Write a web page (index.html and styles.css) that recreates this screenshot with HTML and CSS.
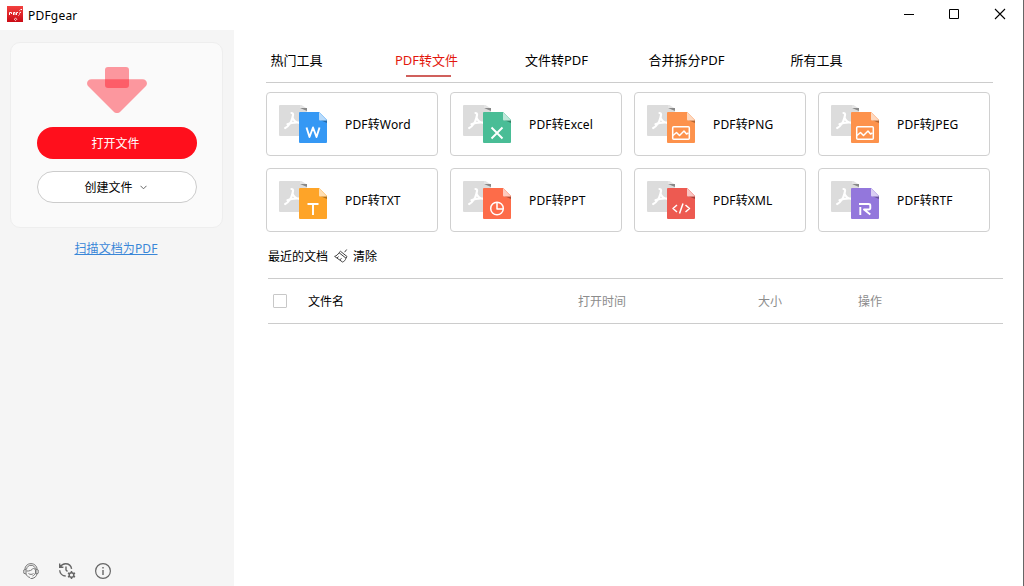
FILE: index.html
```html
<!DOCTYPE html>
<html lang="zh-CN">
<head>
<meta charset="utf-8">
<title>PDFgear</title>
<link rel="stylesheet" href="styles.css">
</head>
<body>
<svg class="defs" width="0" height="0">
  <defs>
    <symbol id="pdf-page" viewBox="0 0 49 39">
      <path d="M1 0H21v3h7v28H1a1 1 0 0 1-1-1V1a1 1 0 0 1 1-1z" fill="#dcdcdc"/>
      <path d="M21 0h1.500l5.500 3.500h-7z" fill="#e4e4e4"/>
      <path d="M21 3h7v3z" fill="#888"/>
      <path d="M12.500 8c2.200 0 1.600 2 1 4.500-1 4-4 9-7.300 10.500M13.500 12.500c1 3 3 5 7 5.500M8.500 19.200c3-1.500 6-2 11.500-1.700" fill="none" stroke="#fff" stroke-width="2.200" stroke-linecap="round"/>
    </symbol>
    <symbol id="front-page" viewBox="0 0 28 31">
      <path d="M1 0H20l8 8v22a1 1 0 0 1-1 1H1a1 1 0 0 1-1-1V1a1 1 0 0 1 1-1z" fill="currentColor"/>
      <path d="M21 8h7v3z" fill="#000" opacity=".3"/>
      <path d="M20 0l8 8.500h-7a1 1 0 0 1-1-1z" fill="currentColor"/>
      <path d="M20 0l8 8.500h-7a1 1 0 0 1-1-1z" fill="#fff" opacity=".65"/>
    </symbol>
    <linearGradient id="brand" x1="0" y1="0" x2="0" y2="1"><stop offset="0" stop-color="#f3413f"/><stop offset="1" stop-color="#cb0b15"/></linearGradient>
  </defs>
</svg>
<div class="window">
  <header class="titlebar">
    <svg class="logo" width="16" height="16" viewBox="0 0 16 16">
      <rect width="16" height="16" fill="url(#brand)"/>
      <path d="M2.500 9V6.500H4.500V8M6.500 9V6.500H8V9M9.500 9V6.500h1.500M12 7.500l2-1.500M12.500 4.500l1-1M14 4l1-1M11.500 9.500l1-1" fill="none" stroke="#fff" stroke-width="1"/>
      <path d="M8.500 12l1.300 1.300-1.300 1.300-1.300-1.300z" fill="none" stroke="#fff" stroke-width=".8"/>
    </svg>
    <span class="app-name">PDFgear</span>
    <div class="controls">
      <svg width="12" height="12" viewBox="0 0 12 12"><path d="M1 6.500h10" stroke="#000" fill="none"/></svg>
      <svg width="12" height="12" viewBox="0 0 12 12"><path d="M1.500 1.500h9v9h-9z" stroke="#000" fill="none"/></svg>
      <svg width="12" height="12" viewBox="0 0 12 12"><path d="M1 1l10 10M11 1L1 11" stroke="#000" stroke-width="1.100" fill="none"/></svg>
    </div>
  </header>
  <div class="body">
    <aside class="sidebar">
      <section class="drop-card">
        <svg class="arrow" width="60" height="47" viewBox="0 0 60 47">
          <path d="M4.500 12.200H55.500c4 0 6 4.500 3 7.300L33.500 44.500c-2 2-5 2-7 0L1.500 19.500c-3-2.800-1-7.300 3-7.300z" fill="#ff0f1e" fill-opacity=".42"/>
          <rect x="18" y="0" width="24" height="21" rx="3" fill="#ff0f1e" fill-opacity=".42"/>
        </svg>
        <button class="btn primary">打开文件</button>
        <button class="btn secondary">创建文件
          <svg width="7" height="5" viewBox="0 0 7 5"><path d="M.5.800l3 3 3-3" stroke="#666" fill="none"/></svg>
        </button>
      </section>
      <a class="scan-link">扫描文档为PDF</a>
      <div class="side-tools">
        <svg width="18" height="18" viewBox="0 0 18 18" fill="none" stroke="#777" stroke-width="1">
          <path d="M2.800 7.500C3 4 5.600 1.600 9 1.600s6 2.400 6.200 5.900M4.500 7.300C5 4.500 6.800 3.300 9 3.300s4 1.200 4.500 4"/>
          <path d="M4 7.200L1.800 8v3.200L4 12zM14 7.200l2.200.8v3.200L14 12zM4 12c.8 2 2 3 4 3.500M15 12c-.5 2-2 4-5 4.500M4.500 9c3 .3 5.500-.8 7-3l2 2v3c-.6 1.500-1.500 2.500-3 3M6.500 11.500c1.500 1.200 3.500 1.200 5 0M8.500 16.500h2"/>
        </svg>
        <svg width="18" height="18" viewBox="0 0 18 18" fill="none" stroke="#666" stroke-width="1.400">
          <path d="M1.700 1.500v3.700h3.700M2 5C3.500 2.800 5 1.700 7.500 1.700c3.200 0 5.600 2 6.100 5.100M1.700 8.200c.2 3.300 2.700 5.700 6 5.800M8 4.500V8l1.500 1.500"/>
          <path d="M13.500 9v8M10 11l7 4M10 15l7-4" stroke-width="1.500"/>
          <circle cx="13.500" cy="13" r="2.300" fill="#f5f5f5"/>
        </svg>
        <svg width="18" height="18" viewBox="0 0 18 18" fill="none" stroke="#666" stroke-width="1.200">
          <circle cx="9" cy="9" r="7.400"/><path d="M9 8v5M9 5v1.500" stroke-width="1.400"/>
        </svg>
      </div>
    </aside>
    <main class="main">
      <nav class="tabs">
        <a class="tab">热门工具</a>
        <a class="tab active">PDF转文件</a>
        <a class="tab">文件转PDF</a>
        <a class="tab">合并拆分PDF</a>
        <a class="tab">所有工具</a>
      </nav>
      <div class="grid">
        <div class="tool"><svg class="tool-icon word" viewBox="0 0 49 39"><use href="#pdf-page" width="49" height="39"/><use href="#front-page" x="20" y="7" width="28" height="31"/><path d="M27.500 22.500l3 9.500 3.500-9.500 3.500 9.500 3-9.500" class="glyph thick"/></svg><span>PDF转Word</span></div>
        <div class="tool"><svg class="tool-icon excel" viewBox="0 0 49 39"><use href="#pdf-page" width="49" height="39"/><use href="#front-page" x="20" y="7" width="28" height="31"/><path d="M28.500 22.500l11 11M39.500 22.500l-11 11" class="glyph thick"/></svg><span>PDF转Excel</span></div>
        <div class="tool"><svg class="tool-icon image" viewBox="0 0 49 39"><use href="#pdf-page" width="49" height="39"/><use href="#front-page" x="20" y="7" width="28" height="31"/><rect x="25.700" y="21.700" width="16.600" height="12.600" rx="1" class="glyph"/><path d="M26 30.500l3.500-3 3 3 4.500-4.500 2.500 3 2-1" class="glyph"/></svg><span>PDF转PNG</span></div>
        <div class="tool"><svg class="tool-icon image" viewBox="0 0 49 39"><use href="#pdf-page" width="49" height="39"/><use href="#front-page" x="20" y="7" width="28" height="31"/><rect x="25.700" y="21.700" width="16.600" height="12.600" rx="1" class="glyph"/><path d="M26 30.500l3.500-3 3 3 4.500-4.500 2.500 3 2-1" class="glyph"/></svg><span>PDF转JPEG</span></div>
        <div class="tool"><svg class="tool-icon txt" viewBox="0 0 49 39"><use href="#pdf-page" width="49" height="39"/><use href="#front-page" x="20" y="7" width="28" height="31"/><path d="M28.500 23h11M34 23v11" class="glyph thick"/></svg><span>PDF转TXT</span></div>
        <div class="tool"><svg class="tool-icon ppt" viewBox="0 0 49 39"><use href="#pdf-page" width="49" height="39"/><use href="#front-page" x="20" y="7" width="28" height="31"/><circle cx="34" cy="27.500" r="6.300" class="glyph"/><path d="M34 21.500v6.500h6" class="glyph"/></svg><span>PDF转PPT</span></div>
        <div class="tool"><svg class="tool-icon xml" viewBox="0 0 49 39"><use href="#pdf-page" width="49" height="39"/><use href="#front-page" x="20" y="7" width="28" height="31"/><path d="M30 24l-4 3.500 4 3.500M38.500 24l4 3.500-4 3.500M36 22.500l-3.500 10" class="glyph"/></svg><span>PDF转XML</span></div>
        <div class="tool"><svg class="tool-icon rtf" viewBox="0 0 49 39"><use href="#pdf-page" width="49" height="39"/><use href="#front-page" x="20" y="7" width="28" height="31"/><path d="M28 23h9.500q1.800 0 1.800 1.500v2.500q0 1.500-1.800 1.500H33l6.300 5M29.300 26v8" class="glyph thick"/></svg><span>PDF转RTF</span></div>
      </div>
      <div class="recent">
        <span>最近的文档</span>
        <svg width="14" height="14" viewBox="0 0 14 14" fill="none" stroke="#444" stroke-width="1">
          <path d="M12.700.500L10.600 3.200M6.500 2.300l6.500 5.200-1 1.700-7-5.500zM5 3.700C4 5.500 2.500 6.800.6 7.400L8.500 13c1.800-.5 3-2 3.500-3.800M3 9l1.600-1.400M5.800 11l1.700-1.800"/>
        </svg>
        <span>清除</span>
      </div>
      <div class="table-head">
        <i class="check"></i>
        <span class="name">文件名</span>
        <span>打开时间</span>
        <span>大小</span>
        <span>操作</span>
      </div>
    </main>
  </div>
</div>
</body>
</html>
```
FILE: styles.css
```css
* { box-sizing: border-box; }
body {
  margin: 0;
  font: 12px/16px "Noto Sans", "Noto Sans CJK SC", sans-serif;
  color: #000;
}
.defs { display: block; }
.window {
  width: 1024px;
  height: 586px;
  display: flex;
  flex-direction: column;
  background: #fff;
  border-right: 1px solid #666;
  overflow: hidden;
}
.titlebar {
  height: 30px;
  flex: none;
  display: flex;
  align-items: center;
  padding: 0 17px 2px 7px;
}
.app-name { margin-left: 5px; padding-top: 3px; letter-spacing: .2px; }
.controls { margin-left: auto; display: flex; gap: 33px; }
.controls svg { display: block; }
.controls svg:last-child { margin-left: 1px; }
.body { flex: 1; display: flex; }
.sidebar {
  width: 234px;
  background: #f5f5f5;
  display: flex;
  flex-direction: column;
  align-items: center;
  padding: 12px 12px 6px 10px;
}
.drop-card {
  width: 213px;
  height: 186px;
  border: 1px solid #eee;
  border-radius: 10px;
  background: #fafafa;
  display: flex;
  flex-direction: column;
  align-items: center;
  padding-top: 24px;
  padding-left: 1px;
}
.arrow { display: block; flex: none; }
.btn {
  width: 160px;
  height: 32px;
  border-radius: 16px;
  font: inherit;
  display: flex;
  align-items: center;
  justify-content: center;
  gap: 7px;
  padding: 2px 2px 0 0;
}
.primary { margin-top: 13px; border: 0; background: #ff0f1c; color: #fff; }
.secondary { margin-top: 12px; border: 1px solid #ccc; background: #fff; color: #000; }
.secondary svg { margin-bottom: 2px; }
.scan-link { margin-top: 13px; color: #3a87d8; text-decoration: underline; text-underline-offset: 1px; letter-spacing: .1px; }
.side-tools { margin-top: auto; align-self: flex-start; display: flex; gap: 18px; padding-left: 12px; }
.side-tools svg { display: block; }
.main { flex: 1; padding: 12px 20px 0 32px; }
.tabs {
  width: 727px;
  height: 41px;
  border-bottom: 1px solid #ccc;
  display: flex;
  font-size: 13px;
}
.tab {
  width: 130px;
  flex: none;
  display: flex;
  flex-direction: column;
  align-items: center;
  padding-top: 10px;
  padding-right: 1px;
}
.tab:first-child { width: 96px; padding-right: 35px; white-space: nowrap; }
.tab.active { color: #e3170d; }
.tab.active::after { content: ""; width: 45px; height: 2px; margin-top: 7px; margin-left: 4px; background: #d0605c; }
.grid {
  display: grid;
  grid-template-columns: repeat(4, 172px);
  grid-auto-rows: 64px;
  gap: 12px;
  margin-top: 9px;
}
.tool {
  border: 1px solid #d0d0d0;
  border-radius: 4px;
  display: flex;
  align-items: center;
  padding-left: 12px;
  letter-spacing: .15px;
}
.tool span { padding-top: 2px; }
.tool-icon { width: 49px; height: 39px; margin-right: 17px; flex: none; }
.glyph { fill: none; stroke: #fff; stroke-width: 1.500; stroke-linejoin: round; }
.thick { stroke-width: 1.900; }
.word { color: #3598f4; }
.excel { color: #49bd96; }
.image { color: #fd924c; }
.txt { color: #fea428; }
.ppt { color: #fd6c49; }
.xml { color: #ed5a51; }
.rtf { color: #9377dc; }
.recent { display: flex; align-items: center; padding-left: 2px; margin-top: 16px; height: 16px; }
.recent span { padding-top: 1px; }
.recent svg { margin: 0 5px 1px 6px; }
.table-head {
  width: 735px;
  height: 46px;
  margin: 14px 0 0 2px;
  border: solid #ccc;
  border-width: 1px 0;
  display: grid;
  grid-template-columns: 40px 270px 180px 100px 1fr;
  align-items: center;
  color: #8c8c8c;
}
.table-head span { padding-top: 2px; }
.check { width: 14px; height: 14px; margin-left: 5px; border: 1px solid #c8c8c8; border-radius: 1px; }
.table-head .name { color: #000; }
```
